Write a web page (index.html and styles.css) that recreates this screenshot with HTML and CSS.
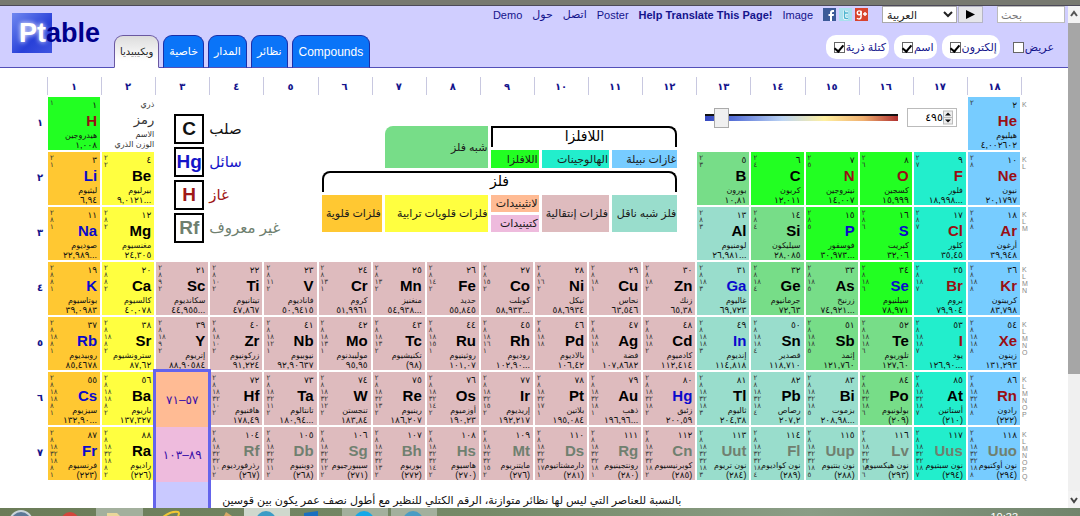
FILE: index.html
```html
<!DOCTYPE html>
<html lang="ar">
<head>
<meta charset="utf-8">
<title>Ptable</title>
<link rel="stylesheet" href="styles.css">
</head>
<body>
<div class="frame-top"></div>
<div class="window">
  <div class="page">
    <header class="header">
      <h1 class="logo"><span class="logo-pt">Pt</span>able</h1>
      <div class="header-main">
        <nav class="nav">
          <a href="#">Demo</a>
          <a href="#">حول</a>
          <a href="#">اتصل</a>
          <a href="#">Poster</a>
          <a href="#" class="strong">Help Translate This Page!</a>
          <a href="#">Image</a>
          <div class="social">
            <a href="#" aria-label="Facebook"><svg viewBox="0 0 13 13"><rect width="13" height="13" fill="#3b5998"/><path d="M7 13V8H5.500V6H7V4.600Q7 2 9.500 2H11V4H10Q9 4 9 5V6H11L10.700 8H9V13Z" fill="#fff"/></svg></a>
            <a href="#" aria-label="Twitter"><svg viewBox="0 0 13 13"><rect width="13" height="13" fill="#a9e0ee"/><path d="M5.500 2.500V9Q5.500 10.500 7 10.500H9M5.500 5H9" fill="none" stroke="#fff" stroke-width="3"/><path d="M5.500 2.500V9Q5.500 10.500 7 10.500H9M5.500 5H9" fill="none" stroke="#4db4cf" stroke-width="1.500"/></svg></a>
            <a href="#" aria-label="Google Plus"><svg viewBox="0 0 13 13"><rect width="13" height="13" fill="#d8432e"/><circle cx="4.200" cy="4.800" r="1.900" fill="none" stroke="#fff" stroke-width="1.400"/><path d="M6.100 2.800V8.500Q6 11 4 11Q2.600 11 2 10M8 6H12M10 4V8" fill="none" stroke="#fff" stroke-width="1.400"/></svg></a>
          </div>
          <div class="lang">
            <select class="lang-select" aria-label="اللغة"><option>العربية</option></select>
            <button class="lang-go" aria-label="Go"><svg viewBox="0 0 10 10"><path d="M0 0L10 5L0 10Z"/></svg></button>
          </div>
          <input class="search" type="text" placeholder="بحث" aria-label="بحث" dir="ltr">
        </nav>
        <div class="header-bottom">
          <div class="tabs">
            <button class="tab active">ويكيبيديا</button>
            <button class="tab">خاصية</button>
            <button class="tab">المدار</button>
            <button class="tab">نظائر</button>
            <button class="tab latin">Compounds</button>
          </div>
          <div class="checks">
            <label class="check"><input type="checkbox" checked>كتلة ذرية</label>
            <label class="check"><input type="checkbox" checked>اسم</label>
            <label class="check"><input type="checkbox" checked>إلكترون</label>
            <label class="check plain"><input type="checkbox">عريض</label>
          </div>
        </div>
      </div>
    </header>
    <main class="table" id="table">
      <div class="key-cell">
        <span>ذري</span><b>رمز</b><span>الاسم</span><span>الوزن الذري</span>
      </div>
      <div class="states">
        <div class="state solid"><span class="state-box">C</span>صلب</div>
        <div class="state liquid"><span class="state-box">Hg</span>سائل</div>
        <div class="state gas"><span class="state-box">H</span>غاز</div>
        <div class="state unknown"><span class="state-box">Rf</span>غير معروف</div>
      </div>
      <div class="legend">
        <div class="lg metalloid lg-metalloid">شبه فلز</div>
        <div class="lg-brace lg-nonmetals">اللافلزا</div>
        <div class="lg nonmetal lg-nm">اللافلزا</div>
        <div class="lg halogen lg-hal">الهالوجينات</div>
        <div class="lg noble lg-nob">غازات نبيلة</div>
        <div class="lg-brace lg-metals">فلز</div>
        <div class="lg alkali lg-tall lg-c1">فلزات قلوية</div>
        <div class="lg alkaline lg-tall lg-c2">فلزات قلويات ترابية</div>
        <div class="lg lanthanide lg-lan">لانثينيدات</div>
        <div class="lg actinide lg-act">كتينيدات</div>
        <div class="lg transition lg-tall lg-c4">فلزات إنتقالية</div>
        <div class="lg post lg-tall lg-c5">فلز شبه ناقل</div>
      </div>
      <div class="temperature">
        <input class="temp-range" type="range" min="0" max="6000" value="300" aria-label="الحرارة">
        <div class="temp-box">
          <input class="temp-value" type="text" value="٤٩٥" aria-label="كلفن">
          <svg class="spin" viewBox="0 0 10 14"><rect x=".5" y=".5" width="9" height="13" fill="#eee" stroke="#bbb"/><path d="M0 7H10" stroke="#bbb"/><path d="M5 2L8 5H2ZM5 12L8 9H2Z" fill="#111"/></svg>
        </div>
      </div>
      <div class="inner-series">
        <a href="#" class="series lanthanide">٥٧–٧١</a>
        <a href="#" class="series actinide">٨٩–١٠٣</a>
      </div>
      <p class="note" dir="rtl">بالنسبة للعناصر التي ليس لها نظائر متوازنة، الرقم الكتلي للنظير مع أطول نصف عمر يكون بين قوسين</p>
    </main>
  </div>
  <div class="scrollbar">
    <svg class="scroll-arrow" viewBox="0 0 12 17"><path d="M3 10L6 6L9 10" fill="none" stroke="#555" stroke-width="2"/></svg>
    <div class="scroll-thumb"></div>
    <svg class="scroll-arrow down" viewBox="0 0 12 17"><path d="M3 7L6 11L9 7" fill="none" stroke="#444" stroke-width="2"/></svg>
  </div>
</div>
<footer class="taskbar">
  <svg class="task-icons" viewBox="0 0 520 8">
    <g fill="#a3b09d"><rect x="96" width="47" height="8"/><rect x="244" width="46" height="8" fill="#cfd8cd"/><rect x="342" width="46" height="8"/><rect x="391" width="46" height="8"/></g>
    <circle cx="21" cy="14" r="11" fill="#5b7896" stroke="#c9d4da" stroke-width="2"/>
    <circle cx="70" cy="13" r="9" fill="#d3463c"/>
    <path d="M107 5h10l3 3h15v4h-28z" fill="#ead79a"/>
    <path d="M163 9Q171 3 178 4Q180 5 178 8" fill="none" stroke="#f1c733" stroke-width="2"/>
    <path d="M224 8l2-4 6 4z" fill="#d9a866"/>
    <circle cx="266" cy="13" r="10" fill="#3c9cc6"/>
    <path d="M304 5l14-2v5h-14z" fill="#1a6fc0"/>
    <circle cx="364" cy="13" r="10" fill="#16a8e8"/>
    <circle cx="413" cy="13" r="10" fill="#4a9cc4"/>
  </svg>
  <span class="clock">10:33</span>
</footer>
<script src="table.js"></script>
</body>
</html>
```
FILE: styles.css
```css
* { box-sizing: border-box; }
body {
  margin: 0;
  height: 100vh;
  display: flex;
  flex-direction: column;
  overflow: hidden;
  font-family: "Liberation Sans", "DejaVu Sans", sans-serif;
  font-size: 12px;
  background: #fff;
}
a { color: inherit; text-decoration: none; }
button, input, select { font: inherit; margin: 0; }

.frame-top { flex: none; height: 6px; background: #777970; border-bottom: 1px solid #4c4a58; }
.window { flex: 1; min-height: 0; display: flex; }
.page { flex: 1; min-width: 0; display: flex; flex-direction: column; overflow: hidden; }

/* Header */
.header {
  flex: none;
  display: flex;
  min-height: 62px;
  background: #d0ceff;
  border-bottom: 1px solid #5350b8;
}
.logo {
  flex: none;
  width: 114px;
  margin: 0;
  padding: 9px 0 0 19px;
  font-size: 27px;
  line-height: 36px;
  color: #00008b;
  background: linear-gradient(135deg, #7088f0, #2840d8 60%, #3f55e0) 12px 7px / 40px 40px no-repeat;
}
.logo-pt { color: #fff; text-shadow: 0 0 5px #fff; }
.header-main { flex: 1; display: flex; flex-direction: column; justify-content: space-between; }
.nav {
  display: flex;
  justify-content: flex-end;
  align-items: center;
  gap: 10px;
  height: 17px;
  padding-right: 3px;
  font-size: 11px;
  color: #14148c;
}
.nav .strong { font-weight: bold; }
.social { display: flex; gap: 3px; }
.social svg { display: block; width: 13px; height: 13px; }
.lang { display: flex; gap: 1px; margin-left: 4px; }
.lang-select { width: 75px; height: 17px; padding: 0; border: 1px solid #aaa; background: #fff; color: #222; }
.lang-go { width: 25px; height: 17px; padding: 0; border: 1px solid #b5b5c5; background: #e6e6ea; display: grid; place-items: center; }
.lang-go svg { width: 9px; height: 9px; }
.search { width: 68px; height: 17px; margin-left: 4px; padding: 0 3px; border: 1px solid #bbb; background: #fff; }
.search::placeholder { color: #777; }

.header-bottom { display: flex; justify-content: space-between; align-items: flex-end; }
.tabs { display: flex; gap: 4px; margin-bottom: -1px; }
.tab {
  height: 33px;
  padding: 0 5px;
  border: 1px solid #1b2fa8;
  border-bottom-color: #5350b8;
  border-radius: 9px 9px 0 0;
  background: #0a74f8;
  color: #fff;
  font-size: 11px;
}
.tab.active {
  background: linear-gradient(#dcdcdc, #fff 80%);
  border-color: #6a58a0;
  border-bottom-color: #fff;
  color: #222;
  font-size: 10px;
}
.tab.latin { padding: 0 6px; font-size: 12px; }
.checks { display: flex; gap: 5px; padding: 0 14px 8px 0; }
.check {
  display: flex;
  align-items: center;
  gap: 1px;
  height: 24px;
  padding: 0 3px 0 8px;
  border-radius: 10px;
  background: #fff;
  color: #14148c;
  font-size: 11px;
}
.check.plain { background: none; padding-right: 0; }
.check input {
  appearance: none;
  width: 11px;
  height: 11px;
  border: 1px solid #666;
  background: #fff;
}
.check input:checked::after {
  content: "";
  display: block;
  width: 4px;
  height: 7px;
  margin: 0 auto;
  border: solid #000;
  border-width: 0 2px 2px 0;
  transform: rotate(40deg);
}

/* Table */
.table {
  flex: 1;
  display: grid;
  grid-template-columns: 46px repeat(18, minmax(0, 1fr)) 46px;
  grid-template-rows: 18px repeat(7, 53px) 1fr;
  gap: 2px;
  padding-top: 9px;
}
.group {
  display: grid;
  place-items: center;
  margin-left: -1px;
  border-left: 1px solid #c8c8e0;
  color: #14148c;
  font-size: 10px;
  font-weight: bold;
}
.group.last { margin-right: -2px; border-right: 1px solid #c8c8e0; }
.period { padding: 20px 3px 0 0; text-align: right; color: #14148c; font-size: 10px; font-weight: bold; }
.shell-names { padding-top: 4px; color: #888; font-size: 7px; line-height: 7px; }
.shell-names span, .shells span { display: block; }

.element {
  display: flex;
  justify-content: space-between;
  padding: 2px 3px 0 2px;
  white-space: nowrap;
  overflow: hidden;
  color: #111;
}
.shells { flex: none; width: 0; font-size: 7px; line-height: 7px; color: #333; }
.facts { flex: 1; min-width: 0; display: flex; flex-direction: column; align-items: flex-end; }
.number { font-size: 9px; line-height: 12px; }
.symbol { font-size: 15px; line-height: 20px; font-weight: bold; color: #000; }
.name { font-size: 8px; line-height: 9px; }
.mass { font-size: 9px; line-height: 10px; }

.alkali { background: #ffc832; }
.alkaline { background: #ffff40; }
.transition { background: #debbbe; }
.post { background: #99ddcc; }
.metalloid { background: #77dd88; }
.nonmetal { background: #22ff22; }
.halogen { background: #22eecc; }
.noble { background: #77ccff; }
.lanthanide { background: #ffbb94; }
.actinide { background: #eebbdd; }

.liquid .symbol { color: #0a0acc; }
.gas .symbol { color: #990f14; }
.unknown .symbol { color: #708070; }

.key-cell {
  grid-area: 2 / 3;
  display: flex;
  flex-direction: column;
  align-items: flex-end;
  padding-top: 3px;
  color: #333;
  font-size: 8px;
  line-height: 10px;
  white-space: nowrap;
}
.key-cell b { font-weight: normal; font-size: 13px; line-height: 20px; }

.states {
  grid-area: 2 / 4 / span 3 / span 3;
  display: flex;
  flex-direction: column;
  gap: 3px;
  padding: 17px 0 0 18px;
}
.state { display: flex; align-items: center; gap: 5px; font-size: 15px; white-space: nowrap; color: #111; }
.state.liquid { color: #1515c8; }
.state.gas { color: #a01818; }
.state.unknown { color: #6f7f6f; }
.state-box {
  display: grid;
  place-items: center;
  width: 30px;
  height: 30px;
  border: 2px solid #000;
  font-size: 19px;
  font-weight: bold;
}

.legend {
  grid-area: 2 / 7 / span 3 / span 7;
  align-self: start;
  display: grid;
  grid-template-columns: 60fr 103fr 47fr 67fr 65fr;
  grid-template-rows: 21px 18px 21px 17px 17px;
  gap: 3px;
  padding: 29px 18px 0 3px;
  font-size: 11px;
  white-space: nowrap;
}
.lg { display: flex; align-items: center; justify-content: flex-end; padding-right: 1px; color: #1a1a1a; }
.lg-metalloid { grid-area: 1 / 2 / span 2; border-top-left-radius: 8px; }
.lg-brace { border: solid #000; border-width: 2px 2px 0; border-radius: 8px 8px 0 0; text-align: center; font-size: 14px; line-height: 17px; }
.lg-nonmetals { grid-area: 1 / 3 / 2 / 6; border-top-left-radius: 0; }
.lg-nm { grid-area: 2 / 3; }
.lg-hal { grid-area: 2 / 4; }
.lg-nob { grid-area: 2 / 5; }
.lg-metals { grid-area: 3 / 1 / 4 / 6; }
.lg-tall { grid-row: 4 / 6; }
.lg-c1 { grid-column: 1; }
.lg-c2 { grid-column: 2; }
.lg-c4 { grid-column: 4; }
.lg-c5 { grid-column: 5; }
.lg-lan { grid-area: 4 / 3; }
.lg-act { grid-area: 5 / 3; }

.temperature {
  grid-area: 2 / 14 / 3 / 19;
  align-self: start;
  display: flex;
  align-items: center;
  gap: 9px;
  padding: 11px 9px 0 8px;
}
.temp-range { flex: 1; min-width: 0; height: 19px; appearance: none; background: none; }
.temp-range::-webkit-slider-runnable-track {
  height: 7px;
  border-top: 2px solid #111;
  background: linear-gradient(90deg, #3548c0, #5872d8 15%, #bcd4f4 40%, #fff0a0 62%, #f0b070 82%, #b03030);
}
.temp-range::-webkit-slider-thumb {
  appearance: none;
  width: 15px;
  height: 20px;
  margin-top: -8px;
  border: 1px solid #aaa;
  background: #f0f0f0;
}
.temp-box { display: flex; align-items: center; width: 50px; height: 19px; padding-right: 3px; border: 1px solid #bbb; }
.temp-value { width: 35px; padding: 0; border: 0; text-align: right; font-size: 11px; background: none; }
.spin { width: 11px; height: 15px; }

.inner-series {
  grid-area: 7 / 4 / 10 / 5;
  z-index: 1;
  display: flex;
  flex-direction: column;
  margin: -3px -3px 0;
  border: 3px solid #6464ec;
  border-bottom: 0;
  background: #c9c9ff;
}
.series { display: grid; place-items: center; height: 55px; color: #3a10a8; font-size: 12px; }
.note { grid-area: 9 / 5 / 10 / 14; margin: 0; padding: 8px 14px 0 0; font-size: 11px; line-height: 20px; white-space: nowrap; color: #111; }

/* Window chrome */
.scrollbar { flex: none; width: 12px; display: flex; flex-direction: column; background: #f0f0f0; }
.scroll-arrow { flex: none; width: 12px; height: 17px; background: #f3f3f3; }
.scroll-thumb { height: 70%; background: #a6a6a6; }
.scroll-arrow.down { margin-top: auto; }
.taskbar {
  flex: none;
  display: flex;
  justify-content: space-between;
  height: 8px;
  padding-right: 62px;
  overflow: hidden;
  background: linear-gradient(90deg, #6b7c58, #768a68 45%, #8b9d86 75%, #71846c);
}
.task-icons { width: 520px; height: 8px; }
.clock { padding-top: 4px; color: #fff; font-size: 11px; line-height: 11px; }
```
FILE: table.js
```js
// symbol | number | group | period | category | state | name | mass | shells
const rows = `
H|1|1|1|nonmetal|gas|هيدروجين|1,008|1
He|2|18|1|noble|gas|هيليوم|4,002602|2
Li|3|1|2|alkali|liquid|ليثيوم|6,94|2 1
Be|4|2|2|alkaline|solid|بيرليوم|9,0121...|2 2
B|5|13|2|metalloid|solid|بورون|10,81|2 3
C|6|14|2|nonmetal|solid|كربون|12,011|2 4
N|7|15|2|nonmetal|gas|نيتروجين|14,007|2 5
O|8|16|2|nonmetal|gas|كسجين|15,999|2 6
F|9|17|2|halogen|gas|فلور|18,998...|2 7
Ne|10|18|2|noble|gas|نيون|20,1797|2 8
Na|11|1|3|alkali|liquid|صوديوم|22,989...|2 8 1
Mg|12|2|3|alkaline|solid|مغنسيوم|24,305|2 8 2
Al|13|13|3|post|solid|لومنيوم|26,981...|2 8 3
Si|14|14|3|metalloid|solid|سيليكون|28,085|2 8 4
P|15|15|3|nonmetal|liquid|فوسفور|30,973...|2 8 5
S|16|16|3|nonmetal|liquid|كبريت|32,06|2 8 6
Cl|17|17|3|halogen|gas|كلور|35,45|2 8 7
Ar|18|18|3|noble|gas|أرغون|39,948|2 8 8
K|19|1|4|alkali|liquid|بوتاسيوم|39,0983|2 8 8 1
Ca|20|2|4|alkaline|solid|كالسيوم|40,078|2 8 8 2
Sc|21|3|4|transition|solid|سكانديوم|44,955...|2 8 9 2
Ti|22|4|4|transition|solid|تيتانيوم|47,867|2 8 10 2
V|23|5|4|transition|solid|فاناديوم|50,9415|2 8 11 2
Cr|24|6|4|transition|solid|كروم|51,9961|2 8 13 1
Mn|25|7|4|transition|solid|منغنيز|54,938...|2 8 13 2
Fe|26|8|4|transition|solid|حديد|55,845|2 8 14 2
Co|27|9|4|transition|solid|كوبلت|58,933...|2 8 15 2
Ni|28|10|4|transition|solid|نيكل|58,6934|2 8 16 2
Cu|29|11|4|transition|solid|نحاس|63,546|2 8 18 1
Zn|30|12|4|transition|solid|زنك|65,38|2 8 18 2
Ga|31|13|4|post|liquid|غاليوم|69,723|2 8 18 3
Ge|32|14|4|metalloid|solid|جرمانيوم|72,63|2 8 18 4
As|33|15|4|metalloid|solid|زرنيخ|74,921...|2 8 18 5
Se|34|16|4|nonmetal|liquid|سيلنيوم|78,971|2 8 18 6
Br|35|17|4|halogen|gas|بروم|79,904|2 8 18 7
Kr|36|18|4|noble|gas|كريبتون|83,798|2 8 18 8
Rb|37|1|5|alkali|liquid|روبيديوم|85,4678|2 8 18 8 1
Sr|38|2|5|alkaline|solid|سترونشيوم|87,62|2 8 18 8 2
Y|39|3|5|transition|solid|إتريوم|88,90584|2 8 18 9 2
Zr|40|4|5|transition|solid|زركونيوم|91,224|2 8 18 10 2
Nb|41|5|5|transition|solid|نيوبيوم|92,90637|2 8 18 12 1
Mo|42|6|5|transition|solid|موليبدنوم|95,95|2 8 18 13 1
Tc|43|7|5|transition|solid|تكنيشيوم|(98)|2 8 18 13 2
Ru|44|8|5|transition|solid|روثينيوم|101,07|2 8 18 15 1
Rh|45|9|5|transition|solid|روديوم|102,90...|2 8 18 16 1
Pd|46|10|5|transition|solid|بالاديوم|106,42|2 8 18 18
Ag|47|11|5|transition|solid|فضة|107,8682|2 8 18 18 1
Cd|48|12|5|transition|solid|كادميوم|112,414|2 8 18 18 2
In|49|13|5|post|liquid|إنديوم|114,818|2 8 18 18 3
Sn|50|14|5|post|solid|قصدير|118,710|2 8 18 18 4
Sb|51|15|5|metalloid|solid|إثمد|121,760|2 8 18 18 5
Te|52|16|5|metalloid|solid|تلوريوم|127,60|2 8 18 18 6
I|53|17|5|halogen|gas|يود|126,90...|2 8 18 18 7
Xe|54|18|5|noble|gas|زينون|131,293|2 8 18 18 8
Cs|55|1|6|alkali|liquid|سيزيوم|132,90...|2 8 18 18 8 1
Ba|56|2|6|alkaline|solid|باريوم|137,327|2 8 18 18 8 2
Hf|72|4|6|transition|solid|هافنيوم|178,49|2 8 18 32 10 2
Ta|73|5|6|transition|solid|تانتالوم|180,94...|2 8 18 32 11 2
W|74|6|6|transition|solid|تنجستن|183,84|2 8 18 32 12 2
Re|75|7|6|transition|solid|رينيوم|186,207|2 8 18 32 13 2
Os|76|8|6|transition|solid|أوزميوم|190,23|2 8 18 32 14 2
Ir|77|9|6|transition|solid|إريديوم|192,217|2 8 18 32 15 2
Pt|78|10|6|transition|solid|بلاتين|195,084|2 8 18 32 17 1
Au|79|11|6|transition|solid|ذهب|196,96...|2 8 18 32 18 1
Hg|80|12|6|transition|liquid|زئبق|200,59|2 8 18 32 18 2
Tl|81|13|6|post|solid|ثاليوم|204,38|2 8 18 32 18 3
Pb|82|14|6|post|solid|رصاص|207,2|2 8 18 32 18 4
Bi|83|15|6|post|solid|بزموت|208,98...|2 8 18 32 18 5
Po|84|16|6|metalloid|solid|بولونيوم|(209)|2 8 18 32 18 6
At|85|17|6|halogen|solid|أستاتين|(210)|2 8 18 32 18 7
Rn|86|18|6|noble|gas|رادون|(222)|2 8 18 32 18 8
Fr|87|1|7|alkali|liquid|فرنسيوم|(223)|2 8 18 32 18 8 1
Ra|88|2|7|alkaline|solid|راديوم|(226)|2 8 18 32 18 8 2
Rf|104|4|7|transition|unknown|رذرفورديوم|(267)|2 8 18 32 32 10 2
Db|105|5|7|transition|unknown|دوبنيوم|(268)|2 8 18 32 32 11 2
Sg|106|6|7|transition|unknown|سيبورجيوم|(271)|2 8 18 32 32 12 2
Bh|107|7|7|transition|unknown|بوريوم|(272)|2 8 18 32 32 13 2
Hs|108|8|7|transition|unknown|هاسيوم|(270)|2 8 18 32 32 14 2
Mt|109|9|7|transition|unknown|مايتنريوم|(276)|2 8 18 32 32 15 2
Ds|110|10|7|transition|unknown|دارمشتاتيوم|(281)|2 8 18 32 32 17 1
Rg|111|11|7|transition|unknown|رونتجينيوم|(280)|2 8 18 32 32 18 1
Cn|112|12|7|transition|unknown|كوبرنيسيوم|(285)|2 8 18 32 32 18 2
Uut|113|13|7|post|unknown|نون تريوم|(284)|2 8 18 32 32 18 3
Fl|114|14|7|post|unknown|نون كواديوم|(289)|2 8 18 32 32 18 4
Uup|115|15|7|post|unknown|نون بنتيوم|(288)|2 8 18 32 32 18 5
Lv|116|16|7|post|unknown|نون هيكسيوم|(293)|2 8 18 32 32 18 6
Uus|117|17|7|halogen|unknown|نون سبتيوم|(294)|2 8 18 32 32 18 7
Uuo|118|18|7|noble|unknown|نون أوكتيوم|(294)|2 8 18 32 32 18 8
`.trim().split("\n");

const table = document.getElementById("table");
const arabic = (text) => String(text).replace(/\d/g, (d) => String.fromCharCode(0x660 + Number(d)));
const lines = (list) => list.map((item) => `<span>${item}</span>`).join("");

function place(className, row, column, html) {
  const box = document.createElement("div");
  box.className = className;
  box.style.gridArea = `${row} / ${column}`;
  box.innerHTML = html;
  table.append(box);
}

for (let g = 1; g <= 18; g++) place(g === 18 ? "group last" : "group", 1, g + 1, arabic(g));
for (let p = 1; p <= 7; p++) {
  place("period", p + 1, 1, arabic(p));
  place("shell-names", p + 1, 20, lines([..."KLMNOPQ"].slice(0, p)));
}

for (const row of rows) {
  const [symbol, number, group, period, category, state, name, mass, shells] = row.split("|");
  place(`element ${category} ${state}`, Number(period) + 1, Number(group) + 1,
    `<div class="shells">${lines(shells.split(" ").map(arabic))}</div>
     <div class="facts"><span class="number">${arabic(number)}</span><span class="symbol">${symbol}</span><span class="name">${name}</span><span class="mass">${arabic(mass)}</span></div>`);
}
```
